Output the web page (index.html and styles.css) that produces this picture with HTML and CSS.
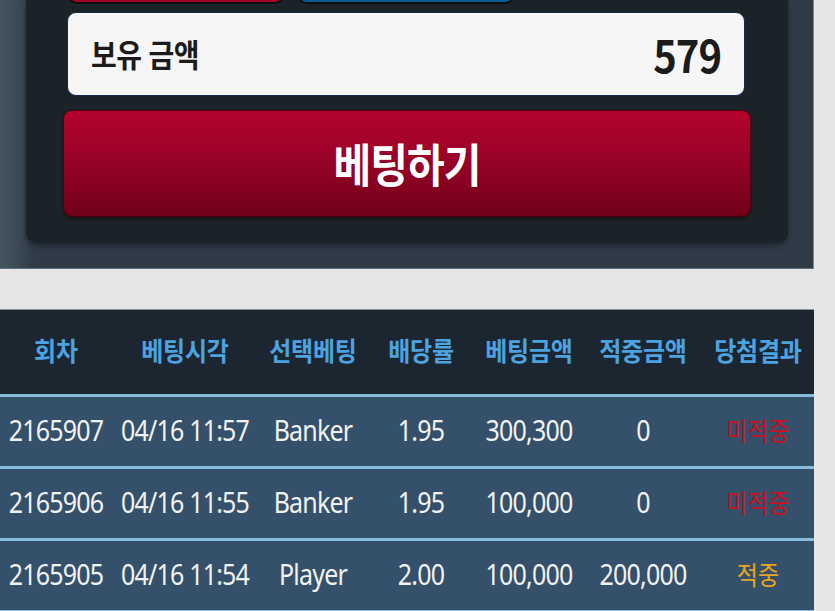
FILE: index.html
```html
<!DOCTYPE html>
<html lang="ko">
<head>
<meta charset="utf-8">
<link rel="stylesheet" href="styles.css">
</head>
<body>
<section class="bet-area">
  <div class="bet-panel">
    <div class="choice-row">
      <div class="choice choice-red"></div>
      <div class="choice choice-blue"></div>
    </div>
    <div class="balance">
      <span class="balance-label"><span class="tall">보유 금액</span></span>
      <span class="balance-value"><span class="tall">579</span></span>
    </div>
    <button class="bet-btn"><span class="tall">베팅하기</span></button>
  </div>
</section>

<section class="history">
  <div class="row head">
    <div class="cell"><span class="tall">회차</span></div>
    <div class="cell"><span class="tall">베팅시각</span></div>
    <div class="cell"><span class="tall">선택베팅</span></div>
    <div class="cell"><span class="tall">배당률</span></div>
    <div class="cell"><span class="tall">베팅금액</span></div>
    <div class="cell"><span class="tall">적중금액</span></div>
    <div class="cell"><span class="tall">당첨결과</span></div>
  </div>
  <div class="row">
    <div class="cell"><span class="tall">2165907</span></div>
    <div class="cell"><span class="tall">04/16 11:57</span></div>
    <div class="cell"><span class="tall">Banker</span></div>
    <div class="cell"><span class="tall">1.95</span></div>
    <div class="cell"><span class="tall">300,300</span></div>
    <div class="cell"><span class="tall">0</span></div>
    <div class="cell lose"><span class="tall">미적중</span></div>
  </div>
  <div class="row">
    <div class="cell"><span class="tall">2165906</span></div>
    <div class="cell"><span class="tall">04/16 11:55</span></div>
    <div class="cell"><span class="tall">Banker</span></div>
    <div class="cell"><span class="tall">1.95</span></div>
    <div class="cell"><span class="tall">100,000</span></div>
    <div class="cell"><span class="tall">0</span></div>
    <div class="cell lose"><span class="tall">미적중</span></div>
  </div>
  <div class="row">
    <div class="cell"><span class="tall">2165905</span></div>
    <div class="cell"><span class="tall">04/16 11:54</span></div>
    <div class="cell"><span class="tall">Player</span></div>
    <div class="cell"><span class="tall">2.00</span></div>
    <div class="cell"><span class="tall">100,000</span></div>
    <div class="cell"><span class="tall">200,000</span></div>
    <div class="cell win"><span class="tall">적중</span></div>
  </div>
</section>
</body>
</html>
```

FILE: styles.css
```css
* { box-sizing: border-box; }

html, body {
  margin: 0;
  padding: 0;
}

body {
  background: #e6e6e6;
  font-family: "Noto Sans", "Noto Sans CJK KR", sans-serif;
  width: 835px;
  height: 611px;
  overflow: hidden;
}

.tall {
  display: inline-block;
  transform: scaleY(1.15);
  white-space: nowrap;
}

/* ---------- top betting area ---------- */
.bet-area {
  width: 814px;
  height: 269px;
  background: #2f3c47;
  border-right: 1px solid #7b8c99;
  border-bottom: 1px solid #5e707d;
  padding-left: 26px;
  padding-right: 25px;
  background-image: linear-gradient(90deg, #45555f 0, #3a4853 20px, #2f3c47 34px);
}

.bet-panel {
  background: #1c2328;
  height: 243px;
  border-radius: 0 0 10px 10px;
  box-shadow: 0 3px 6px rgba(0, 0, 0, 0.35);
  padding: 0 43px 0 41px;
  display: flex;
  flex-direction: column;
}

.choice-row {
  display: flex;
  gap: 12px;
  height: 50px;
  margin-top: -46px;
}

.choice {
  width: 218px;
  border: 2px solid #0d1114;
  border-radius: 10px;
}

.choice-red { background: #a3001f; }
.choice-blue { background: #0b5b96; }

.balance {
  margin-top: 8px;
  height: 84px;
  background: #f6f6f6;
  border: 1.5px solid #16264d;
  border-radius: 9px;
  display: flex;
  align-items: center;
  justify-content: space-between;
  padding: 0 23px 0 23px;
  font-family: "Noto Sans CJK KR", "Noto Sans", sans-serif;
  color: #1b1b1b;
}

.balance-label {
  font-size: 28px;
  font-weight: 700;
  letter-spacing: -0.6px;
}

.balance-label .tall { transform: scaleY(1.12); }

.balance-value {
  font-size: 40px;
  font-weight: 700;
  letter-spacing: -1px;
}

.balance-value .tall { transform: scaleY(1.12); }

.bet-btn {
  margin: 14px -6px 0 -4px;
  height: 107px;
  border: 1px solid #4f000f;
  border-radius: 9px;
  background: linear-gradient(180deg, #b3032c 0%, #9a0228 45%, #6f0017 100%);
  color: #ffffff;
  font-family: "Noto Sans CJK KR", "Noto Sans", sans-serif;
  font-size: 41px;
  font-weight: 700;
  letter-spacing: -1px;
  box-shadow: 0 2px 3px rgba(0, 0, 0, 0.4);
  padding: 0 0 4px;
}

.bet-btn .tall { transform: scaleY(1.12); }

/* ---------- history table ---------- */
.history {
  margin-top: 40px;
  width: 814px;
  border-top: 1px solid #8a8f94;
}

.row {
  display: grid;
  grid-template-columns: 112px 146px 110px 106px 110px 118px 112px;
  height: 72px;
  padding-bottom: 5px;
  background: #34506a;
  border-bottom: 3px solid #86bbdc;
  align-items: center;
  color: #f2f2f2;
  font-size: 25px;
}

.row .cell {
  text-align: center;
  letter-spacing: -0.8px;
}

.row.head {
  height: 87px;
  background: #1b2631;
  color: #4ca3e0;
  font-family: "Noto Sans CJK KR", "Noto Sans", sans-serif;
  font-size: 24px;
  font-weight: 700;
}

.row.head .cell { letter-spacing: -0.2px; }
.row.head .tall { transform: scaleY(1.1); }

.row .cell.lose,
.row .cell.win {
  font-family: "Noto Sans CJK KR", "Noto Sans", sans-serif;
  font-size: 23px;
  letter-spacing: 0;
}

.cell.lose { color: #cc0f1d; }
.cell.win { color: #eca51a; }
```
